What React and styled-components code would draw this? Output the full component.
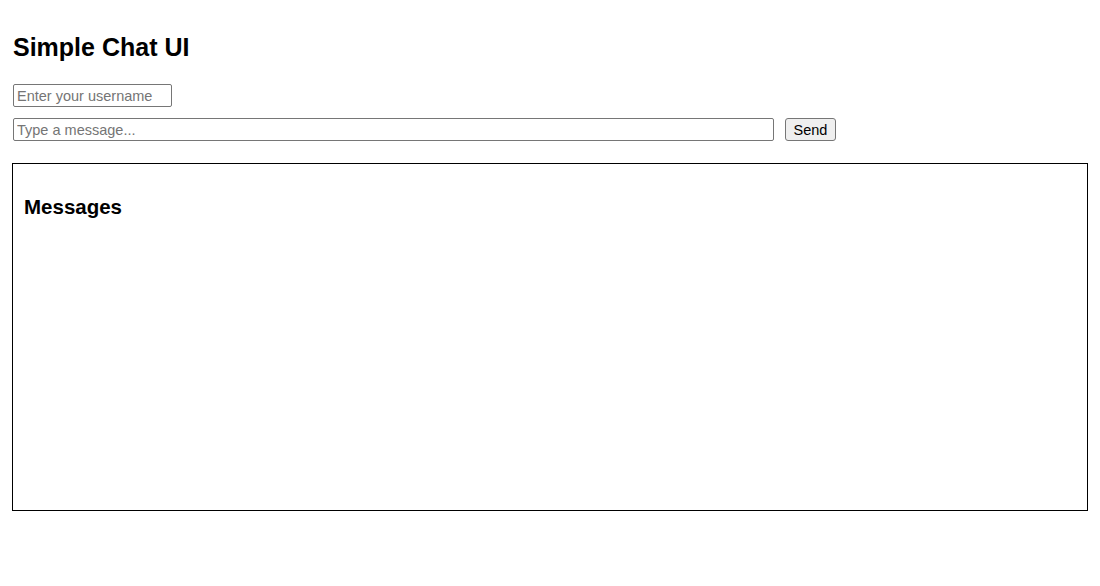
import React from 'react';
import styled, { createGlobalStyle } from 'styled-components';

const GlobalStyle = createGlobalStyle`
  body {
    margin: 0;
    background: #ffffff;
    font-family: "Liberation Sans", Arial, sans-serif;
    color: #000;
  }
`;

const Page = styled.div`
  padding: 12px;
`;

const Title = styled.h1`
  font-size: 25px;
  font-weight: bold;
  margin: 18px 1px 20px;
  line-height: 34px;
`;

const Row = styled.div`
  display: flex;
  align-items: center;
  gap: 11px;
  margin-bottom: ${props => props.$bottom || 0}px;
`;

const TextInput = styled.input`
  box-sizing: border-box;
  width: ${props => props.$width}px;
  height: 23px;
  margin-left: 1px;
  padding: 1px 3px;
  font-family: "Liberation Sans", Arial, sans-serif;
  font-size: 14.5px;
  border: 1px solid #767676;
  border-radius: 2px;
  color: #000;
  &::placeholder {
    color: #757575;
  }
`;

const SendButton = styled.button`
  box-sizing: border-box;
  width: 51px;
  height: 23px;
  padding: 1px 6px;
  font-family: "Liberation Sans", Arial, sans-serif;
  font-size: 14.5px;
  background: #efefef;
  border: 1px solid #767676;
  border-radius: 3px;
  color: #000;
`;

const MessagesBox = styled.div`
  border: 1px solid #000;
  height: 346px;
  padding: 0 11px;
`;

const MessagesTitle = styled.h2`
  font-size: 20.5px;
  font-weight: bold;
  margin: 31px 0 0;
  line-height: 24px;
`;

export default function App() {
  return (
    <Page>
      <GlobalStyle />
      <Title>Simple Chat UI</Title>
      <Row $bottom={11}>
        <TextInput $width={159} placeholder="Enter your username" />
      </Row>
      <Row $bottom={22}>
        <TextInput $width={761} placeholder="Type a message..." />
        <SendButton>Send</SendButton>
      </Row>
      <MessagesBox>
        <MessagesTitle>Messages</MessagesTitle>
      </MessagesBox>
    </Page>
  );
}
